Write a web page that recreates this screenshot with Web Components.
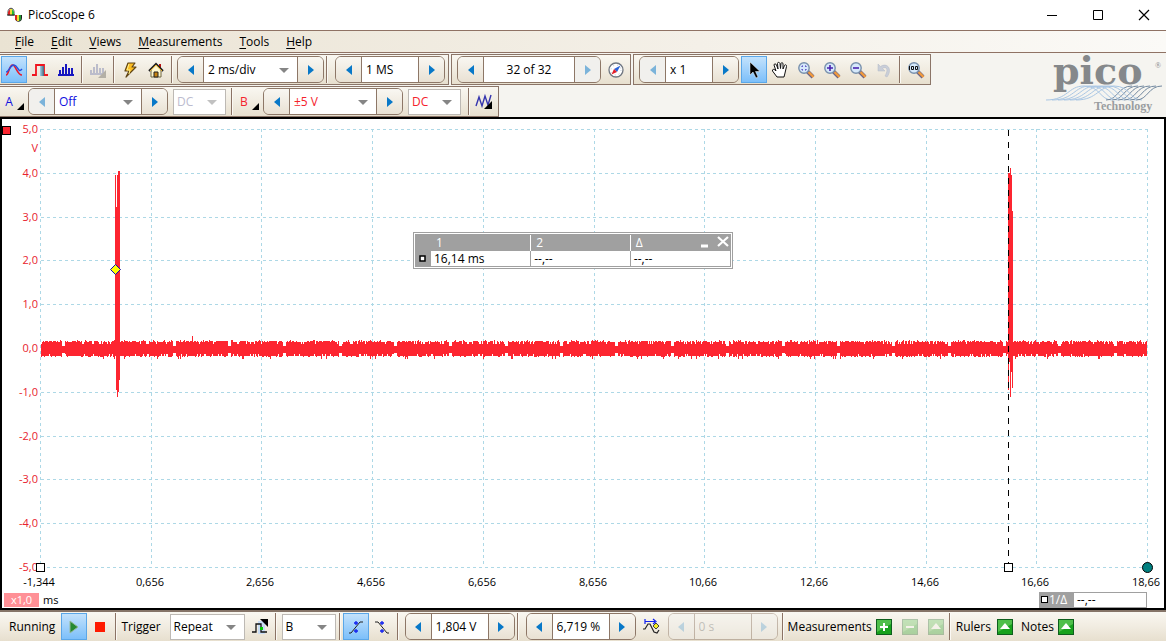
<!DOCTYPE html>
<html lang="en">
<head>
<meta charset="utf-8">
<meta name="viewport" content="width=device-width, initial-scale=1">
<title>PicoScope 6</title>
<style>
  html, body { margin: 0; height: 100%; }
  body { font: 12px/16px "Open Sans", "Noto Sans", sans-serif; color: #000; background: #f5f4f0; overflow: hidden; }
</style>
</head>
<body>
<ps-app></ps-app>
<script>
const ICONS = {
  logo: ['16', '<path d="M1 8V5C1 0 7 0 7 5V8Z" fill="#fff" stroke="#444"/><path d="M1 8V5L3 2V8Z" fill="#d22"/><path d="M3 8V2H5V8Z" fill="#ed3"/><path d="M5 8V2L7 5V8Z" fill="#2b3"/><path d="M8 8H15V11C15 16 8 16 8 11Z" fill="#222"/><path d="M8 8H10V14L8 12Z" fill="#d22"/><path d="M10 8H12V14H10Z" fill="#ed3"/><path d="M12 8H14V13L12 14Z" fill="#293"/><path d="M0 8H8" stroke="#222"/>'],
  wave: ['18', '<path d="M1 14C4 14 4 4 7.500 4S12 14 17 14" fill="none" stroke="#e8192c" stroke-width="1.600"/><path d="M1 11C4 11 5 4 9 4S13 13 17 8" fill="none" stroke="#2450e0" stroke-width="1.400"/>'],
  persist: ['18', '<defs><linearGradient id="g"><stop stop-color="#9fd0ea"/><stop offset="1" stop-color="#46687a"/></linearGradient></defs><path d="M1 14H5V4H13V14H17" fill="none" stroke="#f0141e" stroke-width="1.800"/><path d="M9 5H13V15H9Z" fill="url(#g)"/>'],
  bars: ['18', '<path d="M1 14H17" stroke="#1616c0" stroke-width="2"/><path d="M3 13V9M6 13V6M9 13V3M12 13V7M15 13V7" stroke="#1616c0" stroke-width="2"/>'],
  barsOff: ['18', '<path d="M1 13H15" stroke="#bbbccb" stroke-width="2"/><path d="M2 13V9M5 13V6M8 13V3M11 13V7M14 13V7" stroke="#bbbccb" stroke-width="2"/><path d="M17 9V17H9Z" fill="#b4b0a6"/>'],
  bolt: ['16', '<path d="M6 1L13 1L10 5L14 5L4 15L7 9L3 9Z" fill="#fcbd22" stroke="#604515" stroke-width="1.200" stroke-linejoin="round"/><path d="M7 2L5 8H8L7 12" fill="none" stroke="#fff08a"/>'],
  home: ['16', '<path d="M3 8V15H13V8L8 3Z" fill="#fff8cf" stroke="#6c6442"/><path d="M11 2H13V6H11Z" fill="#b51010"/><path d="M1 9L8 2L15 9" fill="none" stroke="#222" stroke-width="2"/><path d="M2 9L8 3L14 9" fill="none" stroke="#e8b02c"/><path d="M6 15V10H10V15Z" fill="#c78312" stroke="#222"/>'],
  compass: ['16', '<circle cx="8" cy="8" r="7" fill="#fff" stroke="#6f7681" stroke-width="1.300"/><circle cx="8" cy="8" r="5" fill="none" stroke="#b9c4d4" stroke-dasharray="1 3"/><path d="M12.500 3.500L6 7L9 10Z" fill="#2a62d8"/><path d="M3.500 12.500L6 7L9 10Z" fill="#e3202a"/>'],
  arrow: ['18', '<path d="M5 1V14L8 11L11 17L13 16L10.500 10.500H15Z" fill="#000" stroke="#fff" stroke-width=".500"/>'],
  hand: ['18', '<path d="M6 16L1.500 10C1 8 3 8 4 9L5 10L3 4C3 2.500 5 2.500 5.500 4L7 8L6.500 2.500C6.500 1 8.500 1 9 2.500L9.500 7.500L10 2.500C10.500 1 12 1.500 12 3V8L13.500 4.500C14 3 16 4 15.500 5.500L14 12L13 16Z" fill="#fff" stroke="#111"/>'],
  zoomBox: ['18', mag('<path d="M5 6V5H6M8 5H9V6M9 8V9H8M6 9H5V8" fill="none" stroke="#4430b8"/>')],
  zoomIn: ['18', mag('<path d="M4 7H10M7 4V10" stroke="#4a22b0" stroke-width="1.600"/>')],
  zoomOut: ['18', mag('<path d="M4 7H10" stroke="#4a22b0" stroke-width="1.600"/>')],
  zoomFull: ['18', mag('<path d="M2.500 5V9M4.500 5.500H6.500V8.500H4.500ZM8.500 5.500H10.500V8.500H8.500Z" fill="none" stroke="#111"/>')],
  undo: ['16', '<path d="M2 2L2 9H9L6.500 6.500C10 4 13 7 9 14L11 15C17 7 11 0 4.500 4.500Z" fill="#c9ced8" stroke="#b3b9c6" stroke-width=".500"/>'],
  nw: ['20', '<path d="M1 14L4 5L7 14L10 4L13 13L16 3" fill="none" stroke="#3434ae" stroke-width="1.400"/><path d="M17 9V17H9Z"/>'],
  play: ['16', '<path d="M4 2L12 8L4 14Z" fill="#258a31" stroke="#95b89b"/>'],
  stop: ['16', '<path d="M3 3H13V13H3Z" fill="#ff1a00"/>'],
  step: ['18', '<path d="M7 3H14V16H7Z" fill="#c8dcf4"/><path d="M1 14H5V6H10V14H16" fill="none" stroke="#111" stroke-width="1.300"/><path d="M9 1H17V9L13 5Z"/><path d="M9 9H12V12H9Z" fill="#0c0"/>'],
  rise: ['16', '<path d="M1 14L3 14L12 3L15 3" fill="none" stroke="#222"/><path d="M8 2V6M6 4H10M8 10V14M6 12H10" stroke="#1020f0" stroke-width="1.300"/>'],
  fall: ['16', '<path d="M1 3L4 3L13 14L15 14" fill="none" stroke="#222"/><path d="M8 2V6M6 4H10M8 10V14M6 12H10" stroke="#1020f0" stroke-width="1.300"/>'],
  delay: ['18', '<path d="M1 11H3L6 6H8L12 14L15 15L17 12" fill="none" stroke="#222" stroke-width="1.200"/><path d="M3 1V6M3 3.500H13M11 1L14 3.500L11 6" fill="none" stroke="#1020f0" stroke-width="1.200"/><path d="M14 5L17 8L14 11L11 8Z" fill="#f4ef20" stroke="#444"/>'],
  add: ['16', green('<path d="M8 4V12M4 8H12" stroke="#fff" stroke-width="2"/>')],
  remove: ['16', green('<path d="M4 8H12" stroke="#fff" stroke-width="2"/>')],
  up: ['16', green('<path d="M8 4L13 10H3Z" fill="#fff"/>')],
  min: ['12', '<path d="M1 6.500H11" stroke="#000"/>'],
  max: ['12', '<path d="M1.500 1.500H10.500V10.500H1.500Z" fill="none" stroke="#000"/>'],
  close: ['12', '<path d="M1 1L11 11M11 1L1 11" stroke="#000" stroke-width="1.200"/>'],
  left: ['12', '<path d="M9 1V11L3 6Z" fill="#0878c8"/>'],
  right: ['12', '<path d="M3 1V11L9 6Z" fill="#0878c8"/>'],
  panelMin: ['12', '<path d="M2 10H9" stroke="#fff" stroke-width="3"/>'],
  panelClose: ['12', '<path d="M1 1L11 10M11 1L1 10" stroke="#fff" stroke-width="2.200"/>']
};
function mag(inner) {
  return '<path d="M10 10L16 16" stroke="#6d6484" stroke-width="4"/><path d="M11.500 11L16.500 16" stroke="#f29a3c" stroke-width="2.400"/>' +
    '<circle cx="7" cy="7" r="5.200" fill="#d6e9fb" stroke="#7890ac" stroke-width="1.400"/>' + inner;
}
function green(inner) {
  return '<path d="M0 0H16V16H0Z" fill="#0d5f1d"/><path d="M1 1H15V15H1Z" fill="#17a11c"/><path d="M1 1H15V5L1 13Z" fill="#4fbf4a"/>' + inner;
}

function define(name, build, after) {
  customElements.define(name, class extends HTMLElement {
    connectedCallback() {
      if (this.shadowRoot) return;
      const t = document.createElement('template');
      t.innerHTML = build(this);
      this.attachShadow({ mode: 'open' }).append(t.content.cloneNode(true));
      if (after) after(this, this.shadowRoot);
    }
  });
}
const attr = (el, n, d = '') => el.getAttribute(n) ?? d;

define('ps-icon', el => {
  const [s, body] = ICONS[attr(el, 'name')];
  return `<style>:host{display:block;flex:none}svg{display:block}</style>
  <svg width="${s}" height="${s}" viewBox="0 0 ${s} ${s}" aria-hidden="true">${body}</svg>`;
});

define('ps-tool', el => `<style>
  :host{display:block;flex:none}
  button{display:flex;align-items:center;justify-content:center;width:26px;height:27px;padding:0;border:1px solid transparent;background:none;font:inherit}
  :host([active]) button{border-color:#5ba7e8;background:linear-gradient(#c3e2fc,#7cbffa)}
  :host([small]) button{width:16px;height:16px;border:0}
  :host([disabled]) button{opacity:.3}
  </style><button type="button" aria-label="${attr(el, 'label')}" ${el.hasAttribute('disabled') ? 'disabled' : ''}><ps-icon name="${attr(el, 'icon')}"></ps-icon></button>`);

define('ps-channel', el => `<style>
  :host{display:block;flex:none}
  button{position:relative;width:26px;height:27px;padding:0 8px 0 0;border:0;background:none;font:inherit;color:inherit}
  svg{position:absolute;right:2px;bottom:5px}
  </style><button type="button"><slot></slot><svg width="7" height="7" viewBox="0 0 7 7" aria-hidden="true"><path d="M7 0V7H0Z" fill="#000"/></svg></button>`);

define('ps-sep', () => `<style>:host{display:block;flex:none;width:1px;height:27px;margin:0 2px;background:#8b7365;border-right:1px solid #fbf9f4}</style>`);

define('ps-bar', () => `<style>
  :host{display:flex;align-items:center;box-sizing:border-box;height:31px;flex:none;border:solid #8b7568;border-width:1px 1px 1px 0;background:linear-gradient(#f9f7f1,#f1ece1 50%,#e7dfce)}
  :host([framed]){border-left-width:1px;padding:0 1px 0 5px}
  </style><slot></slot>`);

const FIELD = `
  select,input{box-sizing:border-box;width:100%;height:100%;margin:0;border:0;border-radius:0;outline:0;background:#fff;color:inherit;font:inherit;appearance:none;opacity:1}
  .field{position:relative;box-sizing:border-box;flex:none}
  .field svg{position:absolute;right:8px;top:11px;pointer-events:none}`;
const CARET = '<svg width="10" height="5" viewBox="0 0 10 5" aria-hidden="true"><path d="M0 0H10L5 5Z" fill="#858585"/></svg>';

define('ps-spinner', el => {
  const v = attr(el, 'value'), label = attr(el, 'label');
  const off = attr(el, 'off');
  const field = el.hasAttribute('drop')
    ? `<select aria-label="${label}"><option>${v}</option></select>${CARET}`
    : `<input type="text" aria-label="${label}" value="${v}">`;
  return `<style>${FIELD}
  :host{display:flex;box-sizing:border-box;height:27px;flex:none;border:1px solid #8d7767;border-radius:6px;overflow:hidden}
  :host([off=both]){opacity:.45}
  .field{width:${attr(el, 'field')}px;border:solid #8d7767;border-width:0 1px}
  input,select{padding:0 4px}
  :host([centered]) input{text-align:center}
  :host([off=both]) input{background:#f3f1ec;color:#888}
  button{display:flex;align-items:center;justify-content:center;width:25px;padding:0;border:0;flex:none;background:linear-gradient(#f9f7f2,#e9e1d3)}
  button[disabled]{background:#f1f0ed}
  button[disabled] ps-icon{opacity:.5}
  </style>
  <button type="button" aria-label="${label} down" ${off === 'left' || off === 'both' ? 'disabled' : ''}><ps-icon name="left"></ps-icon></button>
  <div class="field">${field}</div>
  <button type="button" aria-label="${label} up" ${off === 'right' || off === 'both' ? 'disabled' : ''}><ps-icon name="right"></ps-icon></button>`;
});

define('ps-combo', el => {
  const text = attr(el, 'text');
  return `<style>${FIELD}
  :host{display:flex;align-items:center;flex:none;gap:9px}
  .field{width:${attr(el, 'field')}px;height:26px;border:1px solid #bdb9b4}
  select{padding:0 3px}
  .field svg{top:10px}
  :host([disabled]) select{color:#bcbccf}
  :host([disabled]) .field svg{opacity:.5}
  </style>${text ? `<label for="s">${text}</label>` : ''}
  <div class="field"><select id="s" ${text ? '' : `aria-label="${attr(el, 'label')}"`} ${el.hasAttribute('disabled') ? 'disabled' : ''}><option>${attr(el, 'value')}</option></select>${CARET}</div>`;
});

define('ps-titlebar', () => `<style>
  :host{display:flex;align-items:center;height:30px;padding:0 16px 0 7px;background:#fff;flex:none}
  h1{flex:1;margin:0 0 0 5px;font:inherit}
  nav{display:flex;gap:34px}
  button{width:12px;height:12px;padding:0;border:0;background:none}
  </style><ps-icon name="logo"></ps-icon><h1>PicoScope 6</h1>
  <nav aria-label="Window"><button type="button" aria-label="Minimize"><ps-icon name="min"></ps-icon></button><button type="button" aria-label="Maximize"><ps-icon name="max"></ps-icon></button><button type="button" aria-label="Close"><ps-icon name="close"></ps-icon></button></nav>`);

define('ps-menubar', () => `<style>
  :host{display:flex;align-items:center;gap:17px;box-sizing:border-box;height:23px;padding-left:15px;flex:none;border:solid #8f7264;border-width:1px 0;background:linear-gradient(90deg,#eae3d3,#f4f0e8 60%,#fbfaf7)}
  a{color:inherit;text-decoration:none} u{text-underline-offset:2px}
  </style><a href="#file"><u>F</u>ile</a><a href="#edit"><u>E</u>dit</a><a href="#views"><u>V</u>iews</a><a href="#measurements"><u>M</u>easurements</a><a href="#tools"><u>T</u>ools</a><a href="#help"><u>H</u>elp</a>`);

define('ps-logo', () => {
  let w = '';
  for (let i = 0; i < 6; i++) {
    const x = 1 + i * 6;
    w += `<path d="M${x} 46C${x + 22} 46 ${x + 22} 32 ${x + 38} 32S${x + 54} 46 ${x + 66} 46" stroke="#a9c6e4" fill="none"/>`;
    w += `<path d="M${x + 60} 46C${x + 72} 46 ${x + 72} 32 ${x + 86} 32" stroke="#7389a0" fill="none"/>`;
  }
  return `<style>:host{display:block;flex:none}svg{display:block;overflow:visible}</style>
  <svg width="120" height="62" viewBox="0 0 120 62" role="img" aria-label="pico Technology">
  ${w}<text x="8" y="30" font-family="DejaVu Serif" font-weight="700" font-size="38" fill="#85888b">pico</text>
  <text x="110" y="14" font-family="Liberation Serif" font-size="8" fill="#85888b">®</text>
  <text x="49" y="56" font-family="Liberation Serif" font-weight="700" font-size="12" fill="#9a9da0">Technology</text></svg>`;
});

define('ps-toolbars', () => `<style>
  :host{display:flex;justify-content:space-between;padding:1px 1px 0 0;flex:none;background:#f5f4f0}
  .rows{display:flex;flex-direction:column;gap:1px}
  .row{display:flex;gap:2px}
  .blue{color:#1010e0}.red{color:#f5222d}
  .g2{margin-left:2px}.m5{margin:0 5px}.m53{margin:0 3px 0 5px}
  .lead{padding-left:1px}
  </style>
  <div class="rows">
    <div class="row" role="toolbar" aria-label="Main">
      <ps-bar class="lead">
        <ps-tool icon="wave" label="Scope mode" active></ps-tool><ps-tool icon="persist" label="Persistence mode"></ps-tool><ps-tool icon="bars" label="Spectrum mode"></ps-tool>
        <ps-sep></ps-sep><ps-tool icon="barsOff" label="Spectrum options"></ps-tool><ps-sep></ps-sep>
        <ps-tool icon="bolt" label="Auto setup"></ps-tool><ps-tool icon="home" label="Home"></ps-tool><ps-sep></ps-sep>
        <ps-spinner class="g2" label="Timebase" value="2 ms/div" field="95" drop></ps-spinner>
        <ps-sep></ps-sep>
        <ps-spinner class="m53" label="Samples" value="1 MS" field="58"></ps-spinner>
      </ps-bar>
      <ps-bar framed>
        <ps-spinner label="Waveform" value="32 of 32" field="92" off="right" centered></ps-spinner>
        <ps-tool class="g2" icon="compass" label="Buffer overview"></ps-tool>
      </ps-bar>
      <ps-bar framed>
        <ps-spinner label="Zoom factor" value="x 1" field="48" off="left"></ps-spinner>
        <ps-tool class="g2" icon="arrow" label="Select" active></ps-tool><ps-tool icon="hand" label="Hand"></ps-tool><ps-tool icon="zoomBox" label="Window zoom"></ps-tool><ps-tool icon="zoomIn" label="Zoom in"></ps-tool><ps-tool icon="zoomOut" label="Zoom out"></ps-tool><ps-tool icon="undo" label="Undo zoom"></ps-tool>
        <ps-sep></ps-sep><ps-tool icon="zoomFull" label="Full zoom"></ps-tool>
      </ps-bar>
    </div>
    <div class="row" role="toolbar" aria-label="Channels">
      <ps-bar>
        <ps-channel class="blue">A</ps-channel>
        <ps-spinner class="blue g2" label="Channel A range" value="Off" field="88" off="left" drop></ps-spinner>
        <ps-combo class="m53" label="Channel A coupling" value="DC" field="53" disabled></ps-combo>
        <ps-sep></ps-sep>
        <ps-channel class="red">B</ps-channel>
        <ps-spinner class="red g2" label="Channel B range" value="±5 V" field="88" drop></ps-spinner>
        <ps-combo class="red m5" label="Channel B coupling" value="DC" field="53"></ps-combo>
        <ps-sep></ps-sep>
        <ps-tool icon="nw" label="Signal generator"></ps-tool>
      </ps-bar>
    </div>
  </div>
  <ps-logo></ps-logo>`);

define('ps-readout', () => `<style>
  :host{display:block;box-sizing:border-box;border:1px solid #a0a0a0;background:#fff;padding:1px}
  .in{position:relative;border:1px solid #a0a0a0}
  table{width:100%;border-collapse:collapse;table-layout:fixed}
  th,td{height:15px;padding:0 0 0 3px;text-align:left;font-weight:400;line-height:15px}
  thead th{height:16px;background:#a0a0a0;color:#fff;padding-left:5px;border-left:1px solid #fff;line-height:16px}
  thead th:nth-child(-n+2){border-left:0}
  tbody td+td{border-left:1px solid #a0a0a0}
  .mark{width:12px;background:#a0a0a0;padding:0 0 0 3px}
  svg{display:block}
  nav{position:absolute;right:1px;top:1px;display:flex;gap:6px}
  button{width:12px;height:12px;padding:0;border:0;background:none}
  </style><div class="in"><table>
  <thead><tr><th class="mark"></th><th>1</th><th>2</th><th>Δ</th></tr></thead>
  <tbody><tr><th class="mark" scope="row"><svg width="7" height="7" viewBox="0 0 7 7"><path d="M1 1H6V6H1Z" fill="#fff" stroke="#000" stroke-width="1.500"/></svg></th><td>16,14 ms</td><td>--,--</td><td>--,--</td></tr></tbody>
  </table><nav aria-label="Ruler legend"><button type="button" aria-label="Collapse"><ps-icon name="panelMin"></ps-icon></button><button type="button" aria-label="Close"><ps-icon name="panelClose"></ps-icon></button></nav></div>`);

define('ps-plot', () => `<style>:host{display:block;min-height:0}svg{display:block;width:100%;height:100%;font-size:11px}</style><svg role="img" aria-label="Channel B trace"></svg>`,
(el, root) => {
  const svg = root.querySelector('svg');
  const xs = ['-1,344', '0,656', '2,656', '4,656', '6,656', '8,656', '10,66', '12,66', '14,66', '16,66', '18,66'];
  const draw = () => {
    const W = el.clientWidth, H = el.clientHeight;
    if (!W || !H) return;
    const L = 38, R = W - 17, T = 10, B = H - 24, r = Math.round;
    const X = f => r(L + (R - L) * f), Y = v => r(T + (B - T) * (5 - v) / 10);
    let s = '', grid = '';
    for (let i = 0; i <= 10; i++) {
      const gx = X(i / 10) + .5, gy = Y(5 - i) + .5;
      grid += `M${gx} ${T}V${B}M${L + 1} ${gy}H${R}`;
      s += `<text x="${X(i / 10) - 1}" y="${B + 19}" text-anchor="middle">${xs[i]}</text>`;
      s += `<text x="${L - 2}" y="${gy + 3.5}" text-anchor="end" fill="#e8222e">${5 - i},0</text>`;
    }
    s += `<text x="${L - 2}" y="${T + 23}" text-anchor="end" fill="#e8222e">V</text>`;
    s = `<path d="${grid}" stroke="#add8e6" stroke-dasharray="3 3" shape-rendering="crispEdges"/>` + s;

    // One noise column for each pixel, pinched at every half division.
    let seed = 7, d = '';
    const rnd = () => (seed = (seed * 16807) % 2147483647) / 2147483647;
    const mid = Y(0), half = (R - L) / 20;
    for (let x = L + 1; x < R; x++) {
      const p = (x - L - 23 + half * 2) % half;
      const pinch = p < 1.5 || p > half - 1.5;
      const a = rnd(), b = rnd();
      const up = pinch ? 2 : a > .93 ? 8 : a > .55 ? 7 : a > .12 ? 6 : 4;
      const dn = pinch ? 5 : b > .95 ? 11 : b > .75 ? 9 : b > .12 ? 8 : 6;
      d += `M${x + .5} ${mid - up}V${mid + dn}`;
    }
    const sx = (R - L) / 1107;
    const pulse = (x0, cols) => cols.forEach(([t, b], i) => d += `M${x0 + i + .5} ${Y(t)}V${Y(b)}`);
    pulse(r(L + 75 * sx), [[3.95, -.1], [3.22, -.95], [3.95, -1.12], [4.05, -1], [4.05, -.72]]);
    const rx = r(L + 968 * sx);
    pulse(rx, [[4, -.95], [4, -.32], [4.1, -1.12], [3.95, -.55], [3.13, -.92]]);
    const spike = r(L + 152 * sx) + .5;
    d += `M${spike} ${mid - 12}V${mid}`;
    s += `<path d="${d}" stroke="#fd2530" shape-rendering="crispEdges"/>`;
    s += `<path d="M${rx + .5} ${T + 1}V${B}" stroke="#000" stroke-dasharray="6 6" shape-rendering="crispEdges"/>`;
    const box = x => `<rect x="${x - 3.5}" y="${B - 3.5}" width="8" height="8" fill="#fff" stroke="#000"/>`;
    s += box(L) + box(rx) + `<circle cx="${R + .5}" cy="${B + .5}" r="5" fill="#008080" stroke="#000"/>`;
    s += `<rect x=".5" y="7.5" width="8" height="8" fill="#fd2530" stroke="#000"/>`;
    const mx = r(L + 75 * sx) + .5, my = Y(1.8) + .5;
    s += `<path d="M${mx} ${my - 5}L${mx + 5} ${my}L${mx} ${my + 5}L${mx - 5} ${my}Z" fill="#ff0" stroke="#1010b0"/>`;
    svg.innerHTML = s;
  };
  draw();
  new ResizeObserver(draw).observe(el);
});

define('ps-scope', () => `<style>
  :host{position:relative;display:flex;flex-direction:column;flex:1;min-height:240px;box-sizing:border-box;border:2px solid #000;background:#fff}
  ps-plot{flex:1}
  ps-readout{position:absolute;left:calc(50% - 170px);top:113px;width:320px}
  footer{display:flex;align-items:center;height:17px;padding:0 17px 0 2px;flex:none}
  .x{width:35px;height:14px;background:#ff9096;color:#fff;text-align:center;font-size:11px;line-height:14px}
  .unit{flex:1;padding-left:4px;font-size:11px}
  .freq{display:flex;align-items:center;box-sizing:border-box;width:108px;height:16px;border:1px solid #a0a0a0;line-height:14px}
  .freq b{display:flex;align-items:center;width:34px;height:14px;background:#a0a0a0;color:#fff;font-weight:400;gap:1px}
  .freq i{width:5px;height:5px;border:1px solid #000;background:#fff;margin-left:1px}
  .freq span{padding-left:3px}
  </style><ps-plot></ps-plot><ps-readout></ps-readout>
  <footer><div class="x">x1,0</div><div class="unit">ms</div><div class="freq"><b><i></i>1/Δ</b><span>--,--</span></div></footer>`);

define('ps-status', () => `<style>
  :host{display:flex;align-items:center;box-sizing:border-box;height:31px;padding-left:9px;flex:none;border-top:2px solid #857468;background:linear-gradient(#f9f7f1,#f1ece1 50%,#e7dfce)}
  .g2{margin-left:2px}.m5{margin:0 5px}.m52{margin:0 2px 0 5px}.m31{margin:0 1px 0 3px}.g4{margin-left:4px}.g6{margin-left:6px}.g8{margin-left:8px}.g10{margin-left:10px}
  </style>
  <span>Running</span><ps-tool class="g6" icon="play" label="Start" active></ps-tool><ps-tool icon="stop" label="Stop"></ps-tool>
  <ps-sep></ps-sep><ps-combo class="g2" text="Trigger" value="Repeat" field="75"></ps-combo>
  <ps-tool class="g2" icon="step" label="Advanced triggering"></ps-tool><ps-sep></ps-sep>
  <ps-combo class="m31" label="Trigger channel" value="B" field="54"></ps-combo>
  <ps-sep></ps-sep><ps-tool icon="rise" label="Rising edge" active></ps-tool><ps-tool icon="fall" label="Falling edge"></ps-tool><ps-sep></ps-sep>
  <ps-spinner class="g4" label="Threshold" value="1,804 V" field="58"></ps-spinner><ps-sep></ps-sep>
  <ps-spinner class="m52" label="Pre-trigger" value="6,719 %" field="58"></ps-spinner>
  <ps-tool icon="delay" label="Post-trigger delay"></ps-tool>
  <ps-spinner class="g4" label="Delay" value="0 s" field="58" off="both"></ps-spinner>
  <ps-sep class="g4"></ps-sep>
  <span class="g2">Measurements</span><ps-tool class="g4" small icon="add" label="Add measurement"></ps-tool><ps-tool class="g10" small icon="remove" label="Delete measurement" disabled></ps-tool><ps-tool class="g10" small icon="up" label="Edit measurement" disabled></ps-tool>
  <ps-sep class="m5"></ps-sep>
  <span>Rulers</span><ps-tool class="g6" small icon="up" label="Ruler settings"></ps-tool>
  <span class="g8">Notes</span><ps-tool class="g4" small icon="up" label="Show notes"></ps-tool>`);

define('ps-app', () => `<style>:host{display:flex;flex-direction:column;height:100%}</style>
  <ps-titlebar></ps-titlebar><ps-menubar></ps-menubar><ps-toolbars></ps-toolbars><ps-scope></ps-scope><ps-status></ps-status>`);
</script>
</body>
</html>
